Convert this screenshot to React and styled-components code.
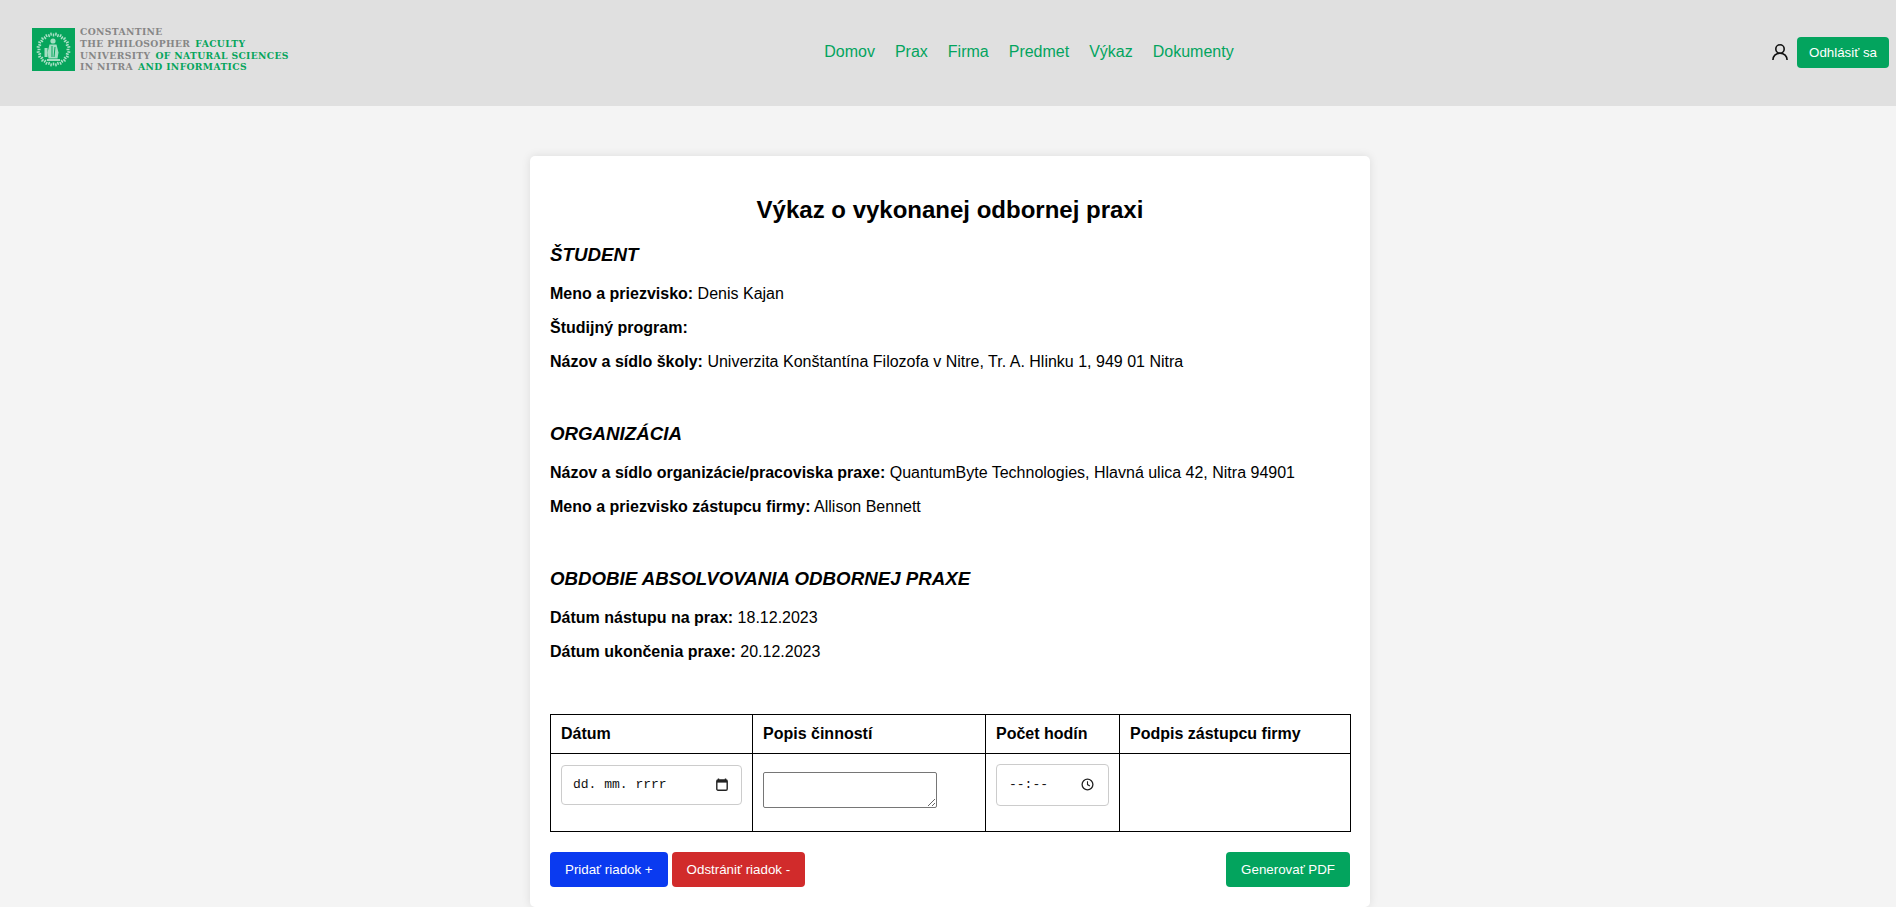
import React from "react";
import styled, { createGlobalStyle } from "styled-components";

const GlobalStyle = createGlobalStyle`
  html, body {
    margin: 0;
    padding: 0;
    background: #f4f4f4;
    font-family: "Liberation Sans", Arial, sans-serif;
    color: #000;
  }
  * { box-sizing: border-box; }
`;

const Header = styled.header`
  height: 106px;
  background: #e0e0e0;
  padding: 0 7px 0 32px;
  display: flex;
  align-items: center;
  justify-content: space-between;
`;

const Logo = styled.div`
  display: flex;
  align-items: center;
  gap: 5px;
  margin-top: -7px;
`;

const Seal = styled.svg`
  width: 43px;
  height: 43px;
  display: block;
`;

const LogoText = styled.div`
  font-family: "DejaVu Serif", "Liberation Serif", serif;
  font-weight: 700;
  font-size: 9.2px;
  line-height: 11.8px;
  letter-spacing: 0.36px;
  color: #868686;
  white-space: nowrap;
  b { color: #06a55c; margin-left: 5px; font-weight: 700; }
`;

const Nav = styled.nav`
  display: flex;
  gap: 20px;
  margin: -2px 3px 0 0;
  a {
    color: #03a45e;
    font-size: 16px;
    text-decoration: none;
  }
`;

const UserBox = styled.div`
  display: flex;
  align-items: center;
  gap: 9px;
  margin-top: -2px;
`;

const Button = styled.button`
  height: ${(p) => p.$h || 35}px;
  padding: 0 ${(p) => p.$px || 15}px;
  border: none;
  border-radius: 4px;
  background: ${(p) => p.$bg || "#03a45e"};
  color: #fff;
  font-family: inherit;
  font-weight: 400;
  font-size: 13.33px;
`;

const Page = styled.div`
  padding-left: 4px;
`;

const Card = styled.main`
  width: 840px;
  margin: 50px auto 0;
  padding: 20px;
  background: #fff;
  border-radius: 5px;
  box-shadow: 0 0 10px rgba(0, 0, 0, 0.1);
`;

const Title = styled.h1`
  margin: 20px 0 0;
  font-size: 24px;
  line-height: 28px;
  text-align: center;
  font-weight: 700;
`;

const Section = styled.section`
  margin-bottom: 52.2px;
`;

const SectionTitle = styled.h3`
  margin: 20px 0 19px;
  font-size: 18.72px;
  line-height: 22px;
  font-style: italic;
  font-weight: 700;
`;

const Row = styled.p`
  margin: 0 0 16px;
  font-size: 16px;
  line-height: 18px;
`;

const Table = styled.table`
  width: 800px;
  table-layout: fixed;
  border-collapse: collapse;
  th, td {
    border: 1px solid #000;
    padding: 10px;
    text-align: left;
    vertical-align: top;
  }
  th {
    height: 39px;
    font-size: 16px;
    line-height: 18px;
    font-weight: 700;
  }
  td { height: 78px; }
`;

const FakeInput = styled.div`
  width: ${(p) => p.$w}px;
  height: ${(p) => p.$h}px;
  margin-top: ${(p) => p.$mt || 0}px;
  border: 1px solid #ccc;
  border-radius: 4px;
  padding: 0 ${(p) => p.$pr}px 0 ${(p) => p.$pl}px;
  display: flex;
  align-items: center;
  justify-content: space-between;
  background: #fff;
  font-family: "Liberation Mono", monospace;
  font-size: 13px;
  color: #111;
  svg { display: block; }
`;

const NotesArea = styled.textarea`
  display: block;
  width: 174px;
  height: 36px;
  margin-top: 8px;
  border: 1px solid #767676;
  border-radius: 2px;
  background: #fff;
`;

const Actions = styled.div`
  display: flex;
  gap: 4px;
  margin-top: 20px;
`;

const PushRight = styled.div`
  margin-left: auto;
`;

function SealMark() {
  // rough drawing of the faculty seal: speckled ring with a seated figure
  const ticks = Array.from({ length: 40 }, (_, i) => i * 9);
  return (
    <Seal viewBox="0 0 43 43">
      <rect width="43" height="43" fill="#06a55c" />
      <g stroke="#d5f0e2" strokeWidth="1.5" opacity="0.8">
        {ticks.map((deg, i) => (
          <line
            key={deg}
            x1="21.5"
            y1={i % 2 ? 4.5 : 5.5}
            x2="21.5"
            y2={i % 2 ? 7.5 : 8.5}
            transform={`rotate(${deg} 21.5 21.5)`}
          />
        ))}
      </g>
      <g fill="#d8f2e4" opacity="0.75">
        <circle cx="21" cy="13" r="2.6" />
        <path d="M17.5 16.5h7l2 8-1 6h-9l-1-6z" />
        <rect x="15" y="31" width="13" height="2" />
        <rect x="12.5" y="20" width="3" height="9" />
      </g>
      <path d="M20 18v11M23 19l-1 10" stroke="#06a55c" strokeWidth="1" />
    </Seal>
  );
}

function CalendarIcon() {
  return (
    <svg width="12" height="13" viewBox="0 0 12 13">
      <path d="M2.5 0.5v2M9.5 0.5v2" stroke="#222" strokeWidth="1.4" />
      <rect x="0.8" y="2" width="10.4" height="10.2" rx="1.2" fill="none" stroke="#222" strokeWidth="1.4" />
      <rect x="1" y="2" width="10" height="2.6" fill="#222" />
    </svg>
  );
}

function ClockIcon() {
  return (
    <svg width="13" height="13" viewBox="0 0 13 13">
      <circle cx="6.5" cy="6.5" r="5.4" fill="none" stroke="#222" strokeWidth="1.3" />
      <path d="M6.5 3.2v3.4l2.4 1.4" fill="none" stroke="#222" strokeWidth="1.1" />
    </svg>
  );
}

function UserIcon() {
  return (
    <svg width="16" height="16" viewBox="0 0 16 16" fill="none" stroke="#111" strokeWidth="1.6">
      <circle cx="8" cy="5" r="4.2" />
      <path d="M0.9 16c0-3.8 2.8-6.8 7.1-6.8s7.1 3 7.1 6.8" />
    </svg>
  );
}

export default function App() {
  return (
    <>
      <GlobalStyle />
      <Header>
        <Logo>
          <SealMark />
          <LogoText>
            <div>CONSTANTINE</div>
            <div>THE PHILOSOPHER<b>FACULTY</b></div>
            <div>UNIVERSITY<b>OF NATURAL SCIENCES</b></div>
            <div>IN NITRA<b>AND INFORMATICS</b></div>
          </LogoText>
        </Logo>
        <Nav>
          <a href="#domov">Domov</a>
          <a href="#prax">Prax</a>
          <a href="#firma">Firma</a>
          <a href="#predmet">Predmet</a>
          <a href="#vykaz">Výkaz</a>
          <a href="#dokumenty">Dokumenty</a>
        </Nav>
        <UserBox>
          <UserIcon />
          <Button $h={31} $px={12}>Odhlásiť sa</Button>
        </UserBox>
      </Header>
      <Page>
        <Card>
          <Title>Výkaz o vykonanej odbornej praxi</Title>
          <Section>
            <SectionTitle>ŠTUDENT</SectionTitle>
            <Row><strong>Meno a priezvisko:</strong> Denis Kajan</Row>
            <Row><strong>Študijný program:</strong></Row>
            <Row><strong>Názov a sídlo školy:</strong> Univerzita Konštantína Filozofa v Nitre, Tr. A. Hlinku 1, 949 01 Nitra</Row>
          </Section>
          <Section>
            <SectionTitle>ORGANIZÁCIA</SectionTitle>
            <Row><strong>Názov a sídlo organizácie/pracoviska praxe:</strong> QuantumByte Technologies, Hlavná ulica 42, Nitra 94901</Row>
            <Row><strong>Meno a priezvisko zástupcu firmy:</strong> Allison Bennett</Row>
          </Section>
          <Section>
            <SectionTitle>OBDOBIE ABSOLVOVANIA ODBORNEJ PRAXE</SectionTitle>
            <Row><strong>Dátum nástupu na prax:</strong> 18.12.2023</Row>
            <Row><strong>Dátum ukončenia praxe:</strong> 20.12.2023</Row>
          </Section>
          <Table>
            <colgroup>
              <col style={{ width: 202 }} />
              <col style={{ width: 233 }} />
              <col style={{ width: 134 }} />
              <col style={{ width: 231 }} />
            </colgroup>
            <thead>
              <tr>
                <th>Dátum</th>
                <th>Popis činností</th>
                <th>Počet hodín</th>
                <th>Podpis zástupcu firmy</th>
              </tr>
            </thead>
            <tbody>
              <tr>
                <td>
                  <FakeInput $w={181} $h={40} $mt={1} $pl={11} $pr={13}>
                    <span>dd. mm. rrrr</span>
                    <CalendarIcon />
                  </FakeInput>
                </td>
                <td><NotesArea /></td>
                <td>
                  <FakeInput $w={113} $h={42} $pl={12} $pr={14}>
                    <span>--:--</span>
                    <ClockIcon />
                  </FakeInput>
                </td>
                <td />
              </tr>
            </tbody>
          </Table>
          <Actions>
            <Button $bg="#0a3af0">Pridať riadok +</Button>
            <Button $bg="#d12b2b">Odstrániť riadok -</Button>
            <PushRight>
              <Button>Generovať PDF</Button>
            </PushRight>
          </Actions>
        </Card>
      </Page>
    </>
  );
}
